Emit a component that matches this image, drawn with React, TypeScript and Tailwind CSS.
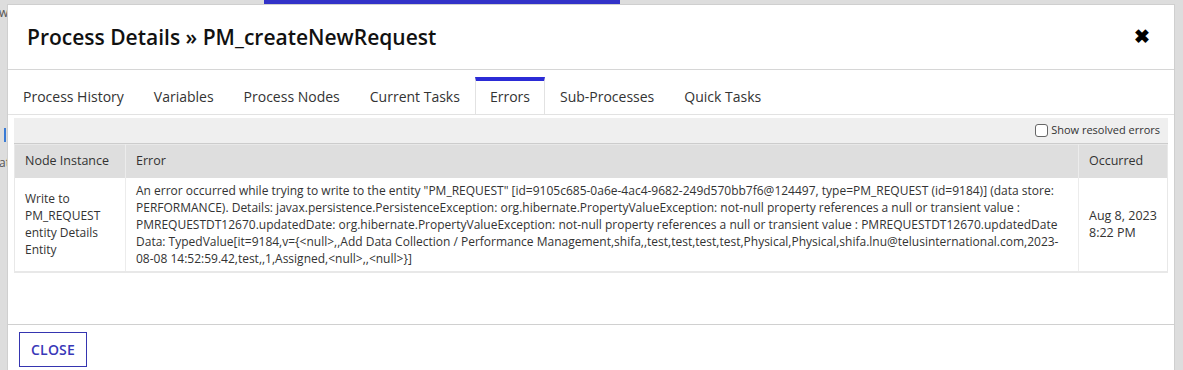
import React from "react";

const tabs = [
  "Process History",
  "Variables",
  "Process Nodes",
  "Current Tasks",
  "Errors",
  "Sub-Processes",
  "Quick Tasks",
];

const errorText =
  'An error occurred while trying to write to the entity "PM_REQUEST" [id=9105c685-0a6e-4ac4-9682-249d570bb7f6@124497, type=PM_REQUEST (id=9184)] (data store: PERFORMANCE). Details: javax.persistence.PersistenceException: org.hibernate.PropertyValueException: not-null property references a null or transient value : PMREQUESTDT12670.updatedDate: org.hibernate.PropertyValueException: not-null property references a null or transient value : PMREQUESTDT12670.updatedDate Data: TypedValue[it=9184,v={<null>,,Add Data Collection / Performance Management,shifa,,test,test,test,test,Physical,Physical,shifa.lnu@telusinternational.com,2023-08-08 14:52:59.42,test,,1,Assigned,<null>,,<null>}]';

const App = () => {
  return (
    <div
      className="relative w-[1183px] h-[370px] overflow-hidden bg-[#dddddd] text-[#333333]"
      style={{ fontFamily: '"Open Sans", "Noto Sans", sans-serif' }}
    >
      {/* page behind the dialog */}
      <div className="h-[4px] flex">
        <div className="w-[264px]" />
        <div className="w-[356px] bg-[#3232c8]" />
      </div>
      <div className="pt-[3px] text-[12px] text-[#555] leading-none -ml-[1px]">wl</div>
      <div className="ml-[4px] mt-[109px] w-[2px] h-[14px] bg-[#3a7bd5]" />
      <div className="mt-[15px] text-[12px] text-[#555] leading-none -ml-[1px]">at</div>

      {/* dialog */}
      <div className="absolute left-[7px] top-[4px] w-[1168px] h-[380px] bg-white border border-[#cfcfcf] flex flex-col">
        {/* header */}
        <div className="h-[65px] flex items-center justify-between pl-[19px] pr-[24px] border-b border-[#d6d6d6]">
          <h1 className="text-[21px] font-semibold text-[#111] pt-[1px]">
            Process Details » PM_createNewRequest
          </h1>
          <button className="text-[19px] font-bold text-black leading-none pb-[1px]">✖</button>
        </div>

        {/* tabs */}
        <div className="flex pt-[7px] border-b border-[#e2e2e2]">
          {tabs.map((t) => {
            const active = t === "Errors";
            return (
              <div
                key={t}
                className={
                  active
                    ? "px-[14px] h-[37px] flex items-center text-[14px] border-t-4 border-t-[#2b2bd6] border-x border-x-[#e2e2e2] -mb-px bg-white pb-[2px]"
                    : "px-[15px] h-[37px] flex items-center text-[14px] pt-[2px]"
                }
              >
                {t}
              </div>
            );
          })}
        </div>

        {/* content */}
        <div className="px-[6px] pt-[3px] flex-1">
          <div className="bg-[#efefef] h-[26px] flex items-center justify-end pr-[8px] gap-[3px] border-b border-[#cccccc]">
            <span className="w-[13px] h-[13px] border border-[#666] rounded-[3px] bg-white" />
            <span className="text-[11px] text-[#333]">Show resolved errors</span>
          </div>
          <table className="w-full border-collapse border border-[#e8e8e8] text-left">
            <thead>
              <tr className="bg-[#dedede] h-[33px] text-[12.5px]">
                <th className="font-normal w-[111px] pl-[10px] border-r border-[#ececec]">Node Instance</th>
                <th className="font-normal pl-[10px] border-r border-[#ececec]">Error</th>
                <th className="font-normal w-[89px] pl-[10px]">Occurred</th>
              </tr>
            </thead>
            <tbody>
              <tr className="text-[12px] leading-[17px] border-b-2 border-[#e8e8e8]">
                <td className="align-middle pl-[10px] pr-[6px] border-r border-[#ececec]">
                  Write to PM_REQUEST entity Details Entity
                </td>
                <td className="align-top pl-[10px] pr-[8px] pt-[4px] pb-[4px] border-r border-[#ececec]">
                  {errorText}
                </td>
                <td className="align-middle pl-[10px] pr-[4px] text-[12.5px]">
                  Aug 8, 2023 8:22 PM
                </td>
              </tr>
            </tbody>
          </table>
        </div>

        {/* footer */}
        <div className="h-[57px] border-t border-[#d0d0d0] pl-[11px] pt-[7px] absolute top-[319px] left-0 right-0">
          <button className="h-[35px] px-[11px] border border-[#3535b0] text-[#3838b8] text-[14px] font-semibold tracking-[0.2px]">
            CLOSE
          </button>
        </div>
      </div>
    </div>
  );
};

export default App;
